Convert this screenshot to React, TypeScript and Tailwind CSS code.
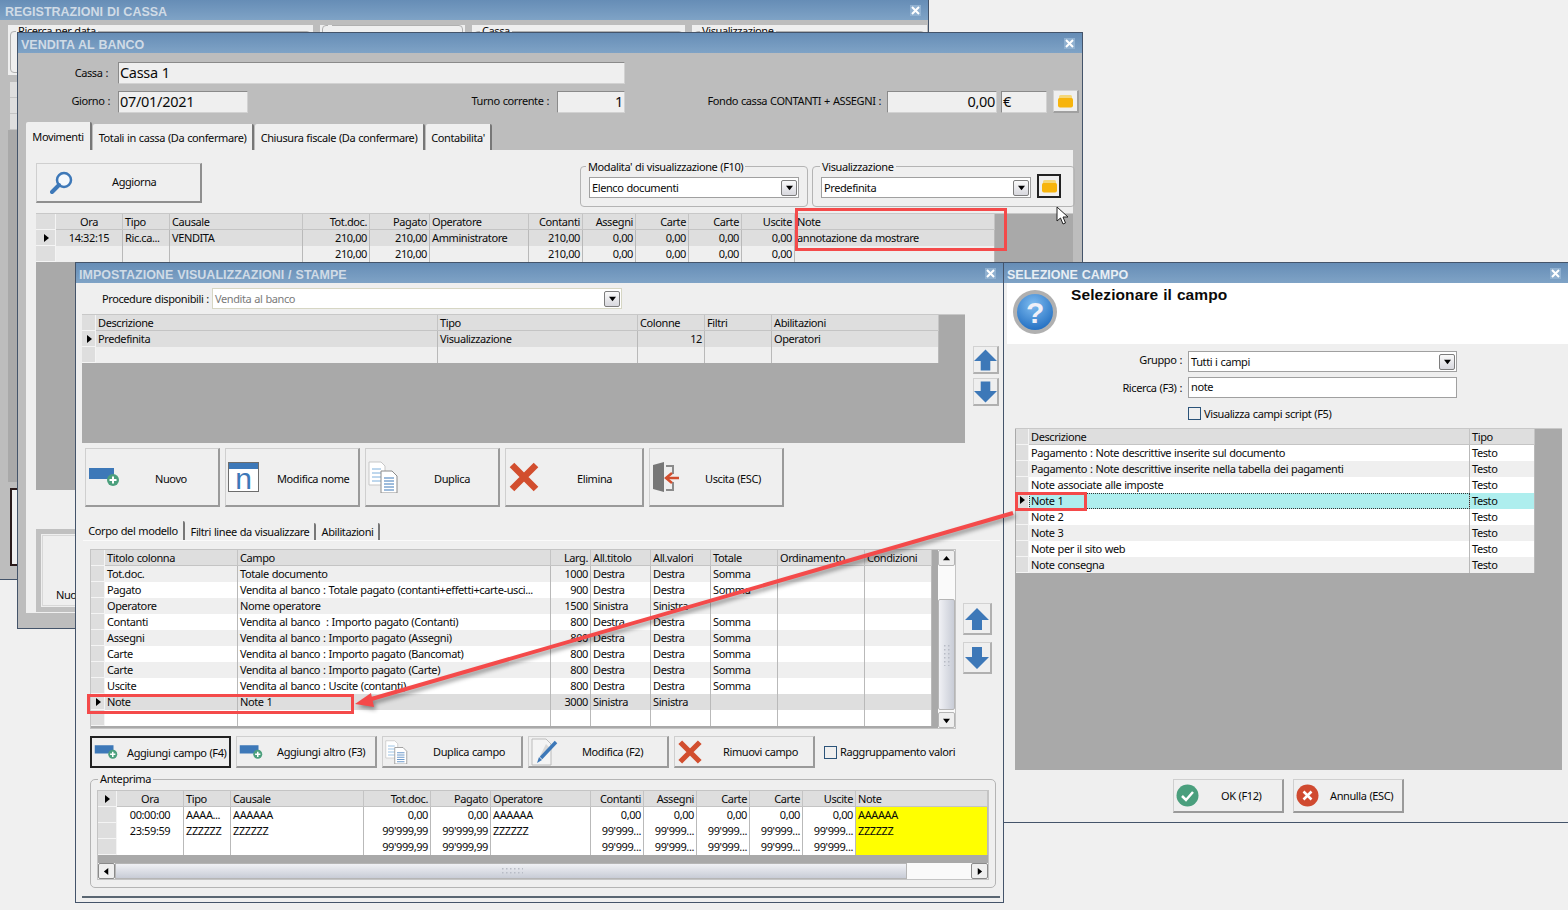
import React from 'react';

type Col = { w: number; t: string; a?: 'r' | 'c'; ca?: 'r' };

const mainCols: Col[] = [
  { w: 67, t: 'Ora', a: 'c' },
  { w: 47, t: 'Tipo' },
  { w: 133, t: 'Causale' },
  { w: 67, t: 'Tot.doc.', a: 'r' },
  { w: 60, t: 'Pagato', a: 'r' },
  { w: 99, t: 'Operatore' },
  { w: 54, t: 'Contanti', a: 'r' },
  { w: 53, t: 'Assegni', a: 'r' },
  { w: 53, t: 'Carte', a: 'r' },
  { w: 53, t: 'Carte', a: 'r' },
  { w: 53, t: 'Uscite', a: 'r' },
  { w: 200, t: 'Note' },
];

const previewCols: Col[] = [
  { w: 67, t: 'Ora', a: 'c' },
  { w: 47, t: 'Tipo' },
  { w: 133, t: 'Causale' },
  { w: 67, t: 'Tot.doc.', a: 'r' },
  { w: 60, t: 'Pagato', a: 'r' },
  { w: 100, t: 'Operatore' },
  { w: 53, t: 'Contanti', a: 'r' },
  { w: 53, t: 'Assegni', a: 'r' },
  { w: 53, t: 'Carte', a: 'r' },
  { w: 53, t: 'Carte', a: 'r' },
  { w: 53, t: 'Uscite', a: 'r' },
  { w: 132, t: 'Note' },
];

const modelCols: Col[] = [
  { w: 133, t: 'Titolo colonna' },
  { w: 313, t: 'Campo' },
  { w: 40, t: 'Larg.', a: 'r' },
  { w: 60, t: 'All.titolo' },
  { w: 60, t: 'All.valori' },
  { w: 67, t: 'Totale' },
  { w: 87, t: 'Ordinamento' },
  { w: 67, t: 'Condizioni' },
];

const modelRows = [
  ['Tot.doc.', 'Totale documento', '1000', 'Destra', 'Destra', 'Somma', '', ''],
  ['Pagato', 'Vendita al banco : Totale pagato (contanti+effetti+carte-usci...', '900', 'Destra', 'Destra', 'Somma', '', ''],
  ['Operatore', 'Nome operatore', '1500', 'Sinistra', 'Sinistra', '', '', ''],
  ['Contanti', 'Vendita al banco  : Importo pagato (Contanti)', '800', 'Destra', 'Destra', 'Somma', '', ''],
  ['Assegni', 'Vendita al banco : Importo pagato (Assegni)', '800', 'Destra', 'Destra', 'Somma', '', ''],
  ['Carte', 'Vendita al banco : Importo pagato (Bancomat)', '800', 'Destra', 'Destra', 'Somma', '', ''],
  ['Carte', 'Vendita al banco : Importo pagato (Carte)', '800', 'Destra', 'Destra', 'Somma', '', ''],
  ['Uscite', 'Vendita al banco : Uscite (contanti)', '800', 'Destra', 'Destra', 'Somma', '', ''],
  ['Note', 'Note 1', '3000', 'Sinistra', 'Sinistra', '', '', ''],
  ['', '', '', '', '', '', '', ''],
];

const fieldRows = [
  ['Pagamento : Note descrittive inserite sul documento', 'Testo'],
  ['Pagamento : Note descrittive inserite nella tabella dei pagamenti', 'Testo'],
  ['Note associate alle imposte', 'Testo'],
  ['Note 1', 'Testo'],
  ['Note 2', 'Testo'],
  ['Note 3', 'Testo'],
  ['Note per il sito web', 'Testo'],
  ['Note consegna', 'Testo'],
];

function Tri({ dir = 'r', size = 8 }: { dir?: 'r' | 'l' | 'u' | 'd'; size?: number }) {
  const pts = { r: '2,0 7,4 2,8', l: '6,0 1,4 6,8', u: '0,6 4,1 8,6', d: '0,2 4,7 8,2' }[dir];
  return (
    <svg width={size} height={size} viewBox="0 0 8 8" className="shrink-0">
      <polygon points={pts} fill="#000" />
    </svg>
  );
}

function DataGrid({
  cols,
  rows,
  ind,
  rowBg,
  selected = -1,
  headArrow = false,
  noteYellow = false,
  dotted = -1,
}: {
  cols: Col[];
  rows: string[][];
  ind: number;
  rowBg: (i: number) => string;
  selected?: number;
  headArrow?: boolean;
  noteYellow?: boolean;
  dotted?: number;
}) {
  const align = (a?: string) => (a === 'r' ? 'text-right' : a === 'c' ? 'text-center' : 'text-left');
  return (
    <div className="w-fit shrink-0">
      <div className="flex h-4 bg-[#dedede]">
        <div style={{ width: ind }} className="flex shrink-0 items-center justify-center border-r border-b border-[#f4f4f4] bg-[#dedede]">
          {headArrow && <Tri />}
        </div>
        {cols.map((c, i) => (
          <div key={i} style={{ width: c.w }} className={`${align(c.a)} h-4 shrink-0 border-r border-b border-[#c4c4c4] px-[2px] leading-[15px] whitespace-nowrap overflow-hidden`}>
            {c.t}
          </div>
        ))}
      </div>
      {rows.map((r, i) => (
        <div key={i} className={`flex h-4 ${rowBg(i)}`}>
          <div style={{ width: ind }} className="flex shrink-0 items-center justify-center border-r border-b border-[#f4f4f4] bg-[#dedede]">
            {selected === i && <Tri />}
          </div>
          {cols.map((c, j) => (
            <div
              key={j}
              style={{ width: c.w }}
              className={`${align(c.ca ?? c.a)} h-4 shrink-0 border-r border-[#b9b9b9] px-[2px] leading-[15px] whitespace-pre overflow-hidden ${
                noteYellow && j === cols.length - 1 ? 'bg-[#ffff00]' : ''
              } ${dotted === i && j === 0 ? 'outline-1 outline-dotted -outline-offset-1 outline-[#333]' : ''}`}
            >
              {r[j]}
            </div>
          ))}
        </div>
      ))}
    </div>
  );
}

function Window({ title, pos, bright = false, children }: { title: string; pos: string; bright?: boolean; children: React.ReactNode }) {
  return (
    <div className={`absolute ${pos} flex flex-col border border-[#44546a] bg-[#efefef]`}>
      <div className="flex h-5 shrink-0 items-center justify-between bg-gradient-to-b from-[#668db6] to-[#7fa3c6] pl-[3px] pr-[7px]">
        <span className={`pt-[5px] font-['Liberation_Sans'] text-[12.5px] font-bold tracking-normal ${bright ? 'text-[#e8eef4]' : 'text-[#d0dbe6]'}`}>{title}</span>
        <span className="flex h-[11px] w-[11px] items-center justify-center bg-[#8fb0d0]">
          <svg width="9" height="9" viewBox="0 0 9 9">
            <path d="M1 1l7 7M8 1l-7 7" stroke="#fff" strokeWidth="2" />
          </svg>
        </span>
      </div>
      {children}
    </div>
  );
}

function Tab({ label, active = false, w }: { label: string; active?: boolean; w: string }) {
  return (
    <div className={`${w} ${active ? 'h-full' : 'h-[calc(100%-2px)]'} flex items-center justify-center rounded-t-[2px] border-r-2 border-[#777] bg-[#efefef] pt-[2px] whitespace-nowrap`}>
      {label}
    </div>
  );
}

function ReadField({ className, children }: { className: string; children?: React.ReactNode }) {
  return (
    <div className={`${className} h-[22px] border border-t-[#8a8a8a] border-l-[#8a8a8a] border-r-[#d2d2d2] border-b-[#d2d2d2] bg-[#efefef] px-[1px] text-[14.5px] leading-[19px] tracking-[-0.3px]`}>
      {children}
    </div>
  );
}

function ArrowBtn() {
  return (
    <div className="flex h-4 w-4 items-center justify-center rounded-[2px] border border-[#7d7d7d] bg-gradient-to-b from-[#fafafa] to-[#d8d8de]">
      <Tri dir="d" size={7} />
    </div>
  );
}

function Combo({ text, w, beige = false, grey = false }: { text: string; w: string; beige?: boolean; grey?: boolean }) {
  return (
    <div className={`${w} flex h-[21px] items-center justify-between border ${beige ? 'border-[#d6d6c4]' : 'border-[#a0a0a0]'} bg-white pl-[2px] pr-[1px]`}>
      <span className={`pt-[1px] ${grey ? 'text-[#7a7a7a]' : ''}`}>{text}</span>
      <ArrowBtn />
    </div>
  );
}

function Btn({ w, h, icon, label, black = false, textLeft }: { w: string; h: string; icon: React.ReactNode; label: string; black?: boolean; textLeft: string }) {
  return (
    <div className={`${w} ${h} flex shrink-0 items-center bg-[#efefef] ${black ? 'border-2 border-[#222]' : 'border border-t-[#cfcfcf] border-l-[#cfcfcf] border-r-2 border-b-2 border-r-[#9a9a9a] border-b-[#9a9a9a]'}`}>
      <span className="ml-[2px] flex w-0 shrink-0 items-center overflow-visible">{icon}</span>
      <span className={`${textLeft} whitespace-nowrap`}>{label}</span>
    </div>
  );
}

function AddIcon({ big = false }: { big?: boolean }) {
  return (
    <svg width={big ? 32 : 24} height={big ? 24 : 18} viewBox="0 0 32 24" className="shrink-0">
      <rect x="1" y="3" width="25" height="11" fill="#3d78b8" />
      <circle cx="25" cy="15" r="6" fill="#4b9f7c" />
      <path d="M25 11.5v7M21.5 15h7" stroke="#fff" strokeWidth="2" />
    </svg>
  );
}

function CrossIcon({ size = 32 }: { size?: number }) {
  return (
    <svg width={size} height={size} viewBox="0 0 32 32" className="shrink-0">
      <path d="M4 4l24 24M28 4L4 28" stroke="#d24e2e" strokeWidth="6.5" />
    </svg>
  );
}

function DocsIcon({ size = 32 }: { size?: number }) {
  return (
    <svg width={size} height={size} viewBox="0 0 32 32" className="shrink-0">
      <path d="M1 1h12l4 4v19H1z" fill="#fff" stroke="#c7c7c7" />
      <path d="M4 8h9M4 12h9M4 16h9M4 20h9" stroke="#7fb0dc" />
      <path d="M13 10h11l5 5v17H13z" fill="#fff" stroke="#8a8a8a" />
      <path d="M16 17h10M16 20h10M16 23h10M16 26h10M16 29h10" stroke="#3d78b8" />
    </svg>
  );
}

function NameIcon() {
  return (
    <div className="h-[30px] w-[31px] shrink-0 border border-[#6d6d6d] bg-white">
      <div className="h-[6px] bg-[#3d78b8]" />
      <div className="h-[22px] text-center font-['Liberation_Sans'] text-[30px] leading-[19px] tracking-normal text-[#3d78b8]">n</div>
    </div>
  );
}

function ExitIcon() {
  return (
    <svg width="30" height="32" viewBox="0 0 30 32" className="shrink-0">
      <path d="M1 4L12 1v30L1 28z" fill="#777" />
      <path d="M14 5h7v8M21 21v8h-7" stroke="#8b8b8b" strokeWidth="2" fill="none" />
      <path d="M14 17h13" stroke="#d24e2e" strokeWidth="2.5" />
      <path d="M20 12l-6 5 6 5" stroke="#d24e2e" strokeWidth="2.5" fill="none" />
    </svg>
  );
}

function EditIcon() {
  return (
    <svg width="28" height="28" viewBox="0 0 28 28" className="shrink-0">
      <path d="M1 1h14l5 5v21H1z" fill="#f4f4f4" stroke="#bcbcbc" />
      <path d="M15 6l5 5-8 8-3-1z" fill="#d8d8d8" />
      <path d="M10 20L25 4" stroke="#3d78b8" strokeWidth="3.500" />
      <path d="M6 25l2-6 3 3z" fill="#3d78b8" />
    </svg>
  );
}

function Folder() {
  return (
    <svg width="17" height="14" viewBox="0 0 17 14">
      <path d="M2 2.5q0-1.5 1.5-1.5h10q1.500 0 1.500 1.500V5H2z" fill="#f4d77a" />
      <path d="M1 5.500Q1 4 2.500 4h12Q16 4 16 5.500v6q0 2-2 2H3q-2 0-2-2z" fill="#f7b40c" />
    </svg>
  );
}

function MoveBtn({ up, className }: { up: boolean; className: string }) {
  return (
    <div className={`${className} flex items-center justify-center border border-t-[#d2d2d2] border-l-[#d2d2d2] border-r-2 border-b-2 border-r-[#b0b0b0] border-b-[#b0b0b0] bg-[#efefef]`}>
      <svg width="24" height="22" viewBox="0 0 24 22">
        <path d={up ? 'M12 0L24 12h-7v10H7V12H0z' : 'M7 0h10v10h7L12 22 0 10h7z'} fill="#3d78b8" />
      </svg>
    </div>
  );
}

function Checkbox({ label, labelCls = '' }: { label: string; labelCls?: string }) {
  return (
    <div className="flex items-center">
      <span className="h-[13px] w-[13px] shrink-0 border border-[#2b5379] bg-[#efefef]" />
      <span className={`ml-[3px] whitespace-nowrap ${labelCls}`}>{label}</span>
    </div>
  );
}

function Grip({ vertical = false }: { vertical?: boolean }) {
  return (
    <svg width={vertical ? 8 : 22} height={vertical ? 22 : 8} viewBox={vertical ? '0 0 8 22' : '0 0 22 8'}>
      {Array.from({ length: 12 }).map((_, i) => {
        const a = (i % 6) * 4 + 1;
        const b = i < 6 ? 1 : 5;
        return <rect key={i} x={vertical ? b : a} y={vertical ? a : b} width="1.500" height="1.500" fill="#b8bcc6" />;
      })}
    </svg>
  );
}

function RegistrazioniWindow() {
  return (
    <Window title="REGISTRAZIONI DI CASSA" pos="-left-px -top-px z-10 h-[581px] w-[930px] [&>div:first-child]:pl-[5px]">
      <div className="flex-1 overflow-hidden bg-[#bdbdbd] pt-[5px] pl-2">
        <div className="flex h-[50px] gap-[7px]">
          {[
            ['w-[305px]', 'Ricerca per data'],
            ['w-[145px]', ''],
            ['w-[213px]', 'Cassa'],
            ['w-[235px]', 'Visualizzazione'],
          ].map(([w, t], i) => (
            <div key={i} className={`${w} bg-[#efefef] px-[2px]`}>
              <fieldset className="h-[48px] rounded-[4px] border border-[#b0b0b0]">
                <legend className="ml-[5px] px-[2px] text-[11px] leading-[12px]">{t}</legend>
              </fieldset>
            </div>
          ))}
        </div>
        <div className="mt-[7px] ml-[2px] flex w-[8px] flex-col">
          <div className="h-4 border-b border-[#c4c4c4] bg-[#dedede]" />
          <div className="h-4 border-b border-[#c4c4c4] bg-[#dedede]" />
          <div className="h-4 border-b border-[#c4c4c4] bg-[#dedede]" />
        </div>
        <div className="h-[352px] w-[10px] bg-[#a9a9a9]" />
        <div className="mt-[6px] ml-[2px] h-[78px] w-[12px] border-2 border-[#2a1a1a] bg-[#efefef]" />
      </div>
    </Window>
  );
}

function VenditaWindow() {
  return (
    <Window title="VENDITA AL BANCO" pos="left-[17px] top-[32px] z-20 h-[597px] w-[1066px]">
      <div className="flex flex-1 flex-col bg-[#bdbdbd] pl-2 pt-[9px]">
        <div className="flex items-center">
          <span className="w-[82px] text-right">Cassa :</span>
          <ReadField className="ml-[10px] w-[507px]">Cassa 1</ReadField>
        </div>
        <div className="mt-[6px] flex items-center">
          <span className="w-[84px] text-right">Giorno :</span>
          <ReadField className="ml-[8px] w-[130px]">07/01/2021</ReadField>
          <span className="w-[301px] text-right">Turno corrente :</span>
          <ReadField className="ml-2 w-[68px] text-right">1</ReadField>
          <span className="ml-[77px] w-[179px] text-right whitespace-nowrap">Fondo cassa CONTANTI + ASSEGNI :</span>
          <ReadField className="ml-[6px] w-[110px] text-right">0,00</ReadField>
          <ReadField className="ml-1 w-[46px]">€</ReadField>
          <div className="ml-[6px] flex h-[23px] w-[26px] items-center justify-center border border-r-2 border-b-2 border-t-[#d2d2d2] border-l-[#d2d2d2] border-r-[#a0a0a0] border-b-[#a0a0a0] bg-[#efefef]">
            <Folder />
          </div>
        </div>
        <div className="mt-[9px] flex h-[28px] items-end gap-[1px]">
          <Tab active label="Movimenti" w="w-[66px]" />
          <Tab label="Totali in cassa (Da confermare)" w="w-[161px]" />
          <Tab label="Chiusura fiscale (Da confermare)" w="w-[170px]" />
          <Tab label="Contabilita'" w="w-[66px]" />
        </div>
        <div className="h-[463px] w-[1047px] bg-[#efefef] pl-[10px] pt-[13px]">
          <div className="flex h-[50px] items-start">
            <div className="flex h-[40px] w-[166px] shrink-0 items-center border border-t-[#cfcfcf] border-l-[#cfcfcf] border-r-2 border-b-2 border-r-[#8f8f8f] border-b-[#8f8f8f]">
              <svg width="24" height="24" viewBox="0 0 24 24" className="ml-[13px] shrink-0">
                <circle cx="14" cy="9" r="7" fill="#f4f8fc" stroke="#3d78b8" strokeWidth="2.5" />
                <path d="M9 14l-7 7" stroke="#3d78b8" strokeWidth="4" strokeLinecap="round" />
              </svg>
              <span className="ml-[38px]">Aggiorna</span>
            </div>
            <fieldset className="-mt-[4px] ml-[378px] h-[48px] w-[226px] shrink-0 rounded-[4px] border border-[#b4b4b4] px-2">
              <legend className="ml-[-3px] px-[2px] leading-[15px]">Modalita' di visualizzazione (F10)</legend>
              <div className="pt-[3px]">
                <Combo text="Elenco documenti" w="w-[210px]" />
              </div>
            </fieldset>
            <fieldset className="-mt-[4px] ml-[4px] h-[48px] w-[263px] shrink-0 rounded-[4px] border border-[#b4b4b4] px-2">
              <legend className="ml-[-1px] px-[2px] leading-[15px]">Visualizzazione</legend>
              <div className="flex items-start gap-[6px] pt-[3px]">
                <Combo text="Predefinita" w="w-[210px]" />
                <div className="-mt-[3px] flex h-[24px] w-[24px] items-center justify-center border-2 border-[#222] bg-[#efefef]">
                  <Folder />
                </div>
              </div>
            </fieldset>
          </div>
          <div className="h-[277px] w-[1037px] border-t border-[#c8c8c8] bg-[#a9a9a9]">
            <DataGrid
              cols={mainCols}
              ind={20}
              selected={0}
              rowBg={(i) => (i === 0 ? 'bg-[#dedede]' : 'bg-[#efefef]')}
              rows={[
                ['14:32:15', 'Ric.ca...', 'VENDITA', '210,00', '210,00', 'Amministratore', '210,00', '0,00', '0,00', '0,00', '0,00', 'annotazione da mostrare'],
                ['', '', '', '210,00', '210,00', '', '210,00', '0,00', '0,00', '0,00', '0,00', ''],
              ]}
            />
          </div>
          <div className="mt-[39px] flex h-[83px] w-[60px] items-end border-[5px] border-[#c0c0c0] pb-[4px] pl-[15px] outline-1 -outline-offset-[7px] outline-[#d8d8d8]">
            <span>Nuovo</span>
          </div>
        </div>
      </div>
    </Window>
  );
}

function ImpostazioneWindow() {
  return (
    <Window title="IMPOSTAZIONE VISUALIZZAZIONI / STAMPE" pos="left-[75px] top-[262px] z-30 h-[641px] w-[929px]">
      <div className="flex flex-1 flex-col">
        <div className="mt-[5px] flex items-center">
          <span className="ml-[26px] w-[105px] pt-[1px] text-right whitespace-nowrap">Procedure disponibili :</span>
          <div className="ml-[5px]">
            <Combo beige grey text="Vendita al banco" w="w-[410px]" />
          </div>
        </div>
        <div className="ml-[6px] mt-[5px] flex items-start">
          <div className="h-[129px] w-[883px] border-t border-[#c8c8c8] bg-[#a9a9a9]">
            <DataGrid
              ind={14}
              selected={0}
              cols={[
                { w: 342, t: 'Descrizione' },
                { w: 200, t: 'Tipo' },
                { w: 67, t: 'Colonne', ca: 'r' },
                { w: 67, t: 'Filtri' },
                { w: 167, t: 'Abilitazioni' },
              ]}
              rowBg={(i) => (i === 0 ? 'bg-[#dedede]' : 'bg-[#efefef]')}
              rows={[
                ['Predefinita', 'Visualizzazione', '12', '', 'Operatori'],
                ['', '', '', '', ''],
              ]}
            />
          </div>
          <div className="ml-2 mt-[32px] flex flex-col gap-1">
            <MoveBtn up className="h-[28px] w-[26px]" />
            <MoveBtn up={false} className="h-[28px] w-[26px]" />
          </div>
        </div>
        <div className="ml-[9px] mt-[5px] flex gap-[5px]">
          <Btn w="w-[135px]" h="h-[59px]" icon={<AddIcon big />} label="Nuovo" textLeft="ml-[67px] pt-[4px]" />
          <Btn w="w-[135px]" h="h-[59px]" icon={<NameIcon />} label="Modifica nome" textLeft="ml-[49px] pt-[4px]" />
          <Btn w="w-[135px]" h="h-[59px]" icon={<DocsIcon />} label="Duplica" textLeft="ml-[66px] pt-[4px]" />
          <Btn w="w-[139px]" h="h-[59px]" icon={<CrossIcon />} label="Elimina" textLeft="ml-[69px] pt-[4px]" />
          <Btn w="w-[135px]" h="h-[59px]" icon={<ExitIcon />} label="Uscita (ESC)" textLeft="ml-[53px] pt-[4px]" />
        </div>
        <div className="ml-[7px] mt-[14px] flex h-[19px] items-end gap-[1px]">
          <Tab active label="Corpo del modello" w="w-[102px]" />
          <Tab label="Filtri linee da visualizzare" w="w-[130px]" />
          <Tab label="Abilitazioni" w="w-[63px]" />
        </div>
        <div className="ml-[7px] mr-[3px] flex-1 border-t border-[#fafafa] pt-2 pl-[7px]">
          <div className="flex items-start">
            <div className="flex h-[180px] w-[866px] border border-[#c4c4c4] bg-[#a9a9a9]">
              <div className="w-[841px]">
                <DataGrid
                  ind={14}
                  cols={modelCols}
                  rows={modelRows}
                  selected={8}
                  rowBg={(i) => (i === 8 ? 'bg-[#dedede]' : i % 2 === 0 ? 'bg-[#efefef]' : 'bg-white')}
                />
              </div>
              <div className="ml-auto flex w-[17px] flex-col bg-[#fafafa]">
                <div className="flex h-4 items-center justify-center rounded-[2px] border border-[#b5b5b5] bg-[#efefef]">
                  <Tri dir="u" size={7} />
                </div>
                <div className="mt-[33px] flex h-[111px] items-center justify-center rounded-[2px] border border-[#b5b5b5] bg-gradient-to-r from-[#f0f1f5] to-[#c8ccd6]">
                  <Grip vertical />
                </div>
                <div className="mt-auto flex h-4 items-center justify-center rounded-[2px] border border-[#b5b5b5] bg-[#efefef]">
                  <Tri dir="d" size={7} />
                </div>
              </div>
            </div>
            <div className="ml-[7px] mt-[54px] flex flex-col gap-[7px]">
              <MoveBtn up className="h-[32px] w-[29px]" />
              <MoveBtn up={false} className="h-[32px] w-[29px]" />
            </div>
          </div>
          <div className="mt-[7px] flex items-center gap-[5px]">
            <Btn black w="w-[141px]" h="h-[32px]" icon={<AddIcon />} label="Aggiungi campo (F4)" textLeft="ml-[33px] pt-[2px]" />
            <Btn w="w-[141px]" h="h-[32px]" icon={<AddIcon />} label="Aggiungi altro (F3)" textLeft="ml-[38px] pt-[2px]" />
            <Btn w="w-[141px]" h="h-[32px]" icon={<DocsIcon size={24} />} label="Duplica campo" textLeft="ml-[48px] pt-[2px]" />
            <Btn w="w-[141px]" h="h-[32px]" icon={<EditIcon />} label="Modifica (F2)" textLeft="ml-[51px] pt-[2px]" />
            <Btn w="w-[141px]" h="h-[32px]" icon={<CrossIcon size={26} />} label="Rimuovi campo" textLeft="ml-[46px] pt-[2px]" />
            <div className="ml-[4px]">
              <Checkbox label="Raggruppamento valori" />
            </div>
          </div>
          <fieldset className="mt-[3px] h-[117px] w-[905px] rounded-[5px] border border-[#b4b4b4] px-[6px]">
            <legend className="ml-[1px] px-[2px] leading-[16px]">Anteprima</legend>
            <div className="mt-[3px] w-[892px] border border-[#c4c4c4] bg-[#a9a9a9]">
              <DataGrid
                ind={19}
                headArrow
                cols={previewCols}
                rowBg={() => 'bg-white'}
                noteYellow
                rows={[
                  ['00:00:00', 'AAAA...', 'AAAAAA', '0,00', '0,00', 'AAAAAA', '0,00', '0,00', '0,00', '0,00', '0,00', 'AAAAAA'],
                  ['23:59:59', 'ZZZZZZ', 'ZZZZZZ', "99'999,99", "99'999,99", 'ZZZZZZ', "99'999...", "99'999...", "99'999...", "99'999...", "99'999...", 'ZZZZZZ'],
                  ['', '', '', "99'999,99", "99'999,99", '', "99'999...", "99'999...", "99'999...", "99'999...", "99'999...", ''],
                ]}
              />
              <div className="mt-[8px] flex h-4 bg-[#fafafa]">
                <div className="flex w-[17px] items-center justify-center rounded-[2px] border border-[#8a8a8a] bg-[#efefef]">
                  <Tri dir="l" size={7} />
                </div>
                <div className="flex w-[792px] items-center justify-center border border-[#b5b5b5] bg-gradient-to-b from-[#f0f1f5] to-[#c8ccd6] pl-[2px]">
                  <Grip />
                </div>
                <div className="ml-auto flex w-[17px] items-center justify-center rounded-[2px] border border-[#8a8a8a] bg-[#efefef]">
                  <Tri dir="r" size={7} />
                </div>
              </div>
            </div>
          </fieldset>
          <div className="mt-[8px] -ml-[8px] h-[2px] w-[918px] bg-[#5a6672]" />
        </div>
      </div>
    </Window>
  );
}

function SelezioneWindow() {
  return (
    <Window bright title="SELEZIONE CAMPO" pos="left-[1003px] top-[262px] z-40 h-[561px] w-[566px]">
      <div className="flex flex-1 flex-col pl-[3px]">
        <div className="flex h-[61px] bg-white">
          <svg width="46" height="46" viewBox="0 0 46 46" className="ml-[5px] mt-[6px] shrink-0">
            <defs>
              <radialGradient id="qball" cx="45%" cy="30%" r="75%">
                <stop offset="0%" stopColor="#7fbcf0" />
                <stop offset="100%" stopColor="#1f6cc0" />
              </radialGradient>
            </defs>
            <circle cx="23" cy="23" r="22" fill="#b0b0b0" />
            <circle cx="23" cy="23" r="18" fill="url(#qball)" />
            <text x="23" y="34" textAnchor="middle" fontSize="30" fontWeight="bold" fontFamily="Liberation Sans, sans-serif" fill="#f0f0f8">
              ?
            </text>
          </svg>
          <span className="ml-[13px] font-['Liberation_Sans'] text-[15.5px] font-bold tracking-[0.1px]">Selezionare il campo</span>
        </div>
        <div className="mt-[7px] flex items-center">
          <span className="-mt-[2px] w-[175px] text-right">Gruppo :</span>
          <div className="ml-[6px]">
            <Combo text="Tutti i campi" w="w-[269px]" />
          </div>
        </div>
        <div className="mt-[5px] flex items-center">
          <span className="w-[175px] pt-[1px] text-right">Ricerca (F3) :</span>
          <div className="ml-[6px] flex h-[21px] w-[269px] items-center border border-[#a0a0a0] bg-white pb-[1px] pl-[2px]">note</div>
        </div>
        <div className="ml-[181px] mt-[7px]">
          <Checkbox label="Visualizza campi script (F5)" labelCls="pt-[1px]" />
        </div>
        <div className="ml-2 mt-[5px] h-[342px] w-[547px] border-t border-[#c8c8c8] bg-[#a9a9a9] pl-px">
          <DataGrid
            ind={13}
            selected={3}
            dotted={3}
            cols={[
              { w: 441, t: 'Descrizione' },
              { w: 65, t: 'Tipo' },
            ]}
            rows={fieldRows}
            rowBg={(i) => (i === 3 ? 'bg-[#aeeeee]' : i % 2 === 0 ? 'bg-white' : 'bg-[#efefef]')}
          />
        </div>
        <div className="ml-[166px] mt-[9px] flex gap-[9px]">
          <Btn
            w="w-[111px]"
            h="h-[34px]"
            label="OK (F12)"
            textLeft="ml-[45px] pt-[2px]"
            icon={
              <svg width="23" height="23" viewBox="0 0 23 23" className="shrink-0">
                <circle cx="11.500" cy="11.500" r="11" fill="#4a9f7d" />
                <path d="M6 12l4 4 7-8" stroke="#fff" strokeWidth="2.500" fill="none" />
              </svg>
            }
          />
          <Btn
            w="w-[111px]"
            h="h-[34px]"
            label="Annulla (ESC)"
            textLeft="ml-[34px] pt-[2px]"
            icon={
              <svg width="23" height="23" viewBox="0 0 23 23" className="shrink-0">
                <circle cx="11.500" cy="11.500" r="11" fill="#d04a30" />
                <path d="M7.500 7.500l8 8M15.500 7.500l-8 8" stroke="#fff" strokeWidth="2.500" />
              </svg>
            }
          />
        </div>
      </div>
    </Window>
  );
}

export default function App() {
  return (
    <div className="relative h-[910px] w-[1568px] overflow-hidden bg-[#f0f0f0] font-['Noto_Sans',sans-serif] text-[11px] tracking-[-0.4px] [word-spacing:0.5px] text-[#0a0a0a]">
      <RegistrazioniWindow />
      <VenditaWindow />
      <ImpostazioneWindow />
      <SelezioneWindow />

      {/* annotazioni rosse sopra le finestre */}
      <div className="absolute left-[795px] top-[208px] z-50 h-[43px] w-[212px] border-[3px] border-[#f44a4a]" />
      <div className="absolute left-[87px] top-[694px] z-50 h-[20px] w-[267px] border-[3px] border-[#f44a4a]" />
      <div className="absolute left-[1015px] top-[492px] z-50 h-[19px] w-[72px] border-[3px] border-[#f44a4a]" />
      <svg width="1568" height="910" viewBox="0 0 1568 910" className="pointer-events-none absolute left-0 top-0 z-50 drop-shadow-[2px_3px_2px_rgba(0,0,0,0.4)]">
        <line x1="1013" y1="513" x2="368" y2="700" stroke="#f44a4a" strokeWidth="4" />
        <polygon points="355,704 371,693 374,707" fill="#f44a4a" />
      </svg>
      <svg width="14" height="19" viewBox="0 0 14 19" className="absolute left-[1056px] top-[206px] z-50">
        <path d="M1 1v14l3.500-3 2.500 6 2.500-1-2.500-6h5z" fill="#fff" stroke="#222" />
      </svg>
    </div>
  );
}
